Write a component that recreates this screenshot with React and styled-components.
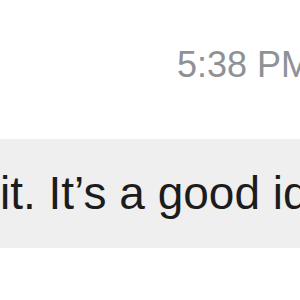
import React from 'react';
import styled, { createGlobalStyle } from 'styled-components';

const GlobalStyle = createGlobalStyle`
  html,
  body {
    margin: 0;
    padding: 0;
    background: #ffffff;
    overflow: hidden;
  }
`;

export default function App() {
  return (
    <>
      <GlobalStyle />
      <Stage>
        <Thread>
          <MetaRow>
            <Timestamp>5:38 PM</Timestamp>
          </MetaRow>
          <Bubble>
            <BubbleText>it. It’s a good idea to try it.</BubbleText>
          </Bubble>
        </Thread>
      </Stage>
    </>
  );
}

const Stage = styled.div`
  width: 300px;
  height: 300px;
  overflow: hidden;
  background: #ffffff;
  font-family: 'Liberation Sans', Arial, sans-serif;
`;

const Thread = styled.div`
  display: flex;
  flex-direction: column;
  width: 340px;
  margin-left: -20px;
  padding-top: 45px;
`;

const MetaRow = styled.div`
  display: flex;
  justify-content: flex-end;
  padding-right: 9px;
`;

const Timestamp = styled.span`
  font-size: 36px;
  line-height: 40px;
  color: #8e9297;
  white-space: nowrap;
`;

const Bubble = styled.div`
  margin-top: 54px;
  background: #efefef;
  padding: 26px 0 27px 20px;
  overflow: hidden;
`;

const BubbleText = styled.p`
  margin: 0;
  font-size: 46px;
  line-height: 56px;
  color: #1c1c1c;
  white-space: nowrap;
`;
